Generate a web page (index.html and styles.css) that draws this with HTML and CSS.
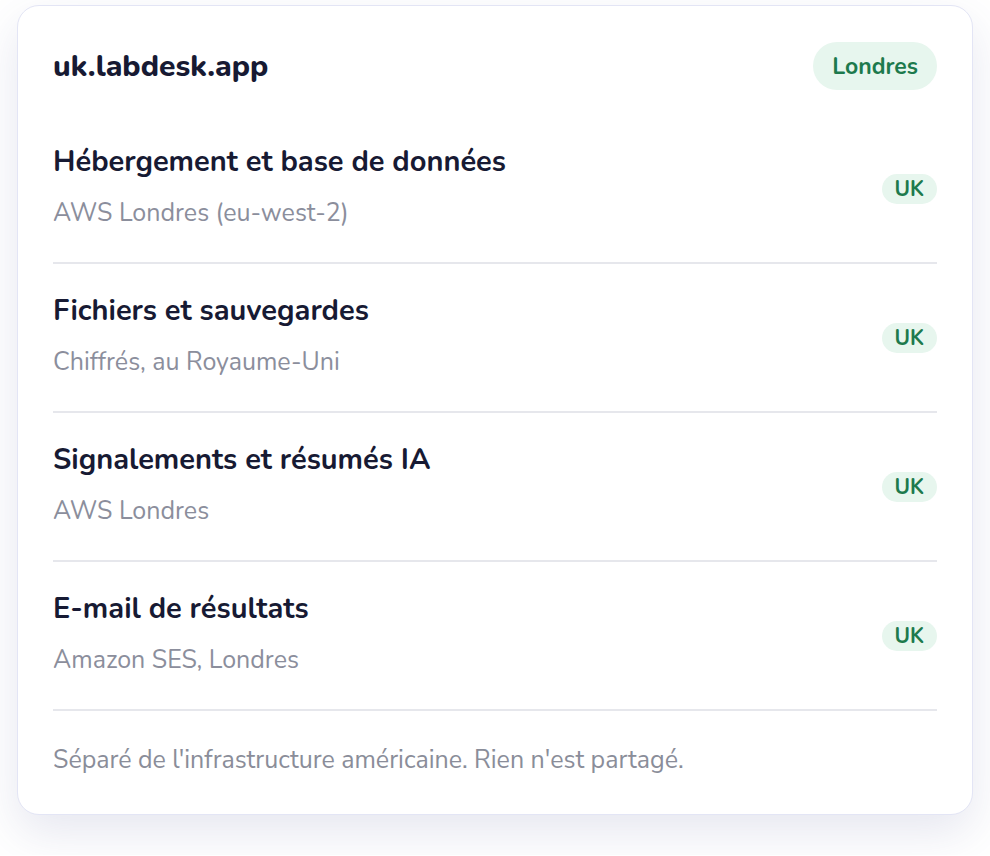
FILE: index.html
```html
<!DOCTYPE html>
<html lang="fr">

<head>
    <meta charset="UTF-8">
    <meta name="viewport" content="width=device-width, initial-scale=1.0">
    <title>uk.labdesk.app</title>
    <link rel="stylesheet" href="styles.css">
</head>

<body>
    <div class="card">
        <div class="card-head">
            <h2 class="domain">uk.labdesk.app</h2>
            <span class="pill">Londres</span>
        </div>

        <ul class="rows">
            <li class="row">
                <div class="row-text">
                    <h3>Hébergement et base de données</h3>
                    <p>AWS Londres (eu-west-2)</p>
                </div>
                <span class="tag">UK</span>
            </li>
            <li class="row">
                <div class="row-text">
                    <h3>Fichiers et sauvegardes</h3>
                    <p>Chiffrés, au Royaume-Uni</p>
                </div>
                <span class="tag">UK</span>
            </li>
            <li class="row">
                <div class="row-text">
                    <h3>Signalements et résumés IA</h3>
                    <p>AWS Londres</p>
                </div>
                <span class="tag">UK</span>
            </li>
            <li class="row">
                <div class="row-text">
                    <h3>E-mail de résultats</h3>
                    <p>Amazon SES, Londres</p>
                </div>
                <span class="tag">UK</span>
            </li>
        </ul>

        <p class="note">Séparé de l'infrastructure américaine. Rien n'est partagé.</p>
    </div>
</body>

</html>
```

FILE: styles.css
```css
* {
    margin: 0;
    padding: 0;
    box-sizing: border-box;
}

html {
    min-height: 100%;
    background: #ffffff;
}

body {
    font-family: 'Nunito', 'Lato', 'Noto Sans', sans-serif;
    color: #171a33;
    padding: 5px 17px 40px;
}

.card {
    background: #ffffff;
    border: 1px solid #e3e5f5;
    border-radius: 22px;
    box-shadow: 0 18px 46px rgba(80, 85, 150, 0.14);
    padding: 36px 35px 38px;
}

.card-head {
    display: flex;
    align-items: center;
    justify-content: space-between;
    height: 48px;
    margin-bottom: 25px;
}

.domain {
    font-size: 30px;
    font-weight: 800;
    color: #171a33;
}

.pill {
    display: inline-flex;
    align-items: center;
    height: 48px;
    padding: 0 19px;
    border-radius: 24px;
    background: #e7f6ee;
    color: #1d7a4d;
    font-size: 23px;
    font-weight: 700;
}

.rows {
    list-style: none;
}

.row {
    display: flex;
    align-items: center;
    justify-content: space-between;
    padding: 28px 0 32px;
    border-bottom: 2px solid #e6e7ec;
}

.row h3 {
    font-size: 29px;
    font-weight: 700;
    line-height: 38px;
    color: #171a33;
}

.row p {
    margin-top: 15px;
    font-size: 25px;
    line-height: 34px;
    color: #8b8e9c;
}

.tag {
    display: inline-flex;
    align-items: center;
    height: 30px;
    margin-top: 4px;
    padding: 0 13px;
    border-radius: 15px;
    background: #e7f6ee;
    color: #1d7a4d;
    font-size: 21px;
    font-weight: 700;
}

.note {
    margin-top: 33px;
    font-family: 'Nunito Sans', 'Roboto', 'Liberation Sans', sans-serif;
    font-size: 25px;
    line-height: 32px;
    color: #8a8d99;
}
```
